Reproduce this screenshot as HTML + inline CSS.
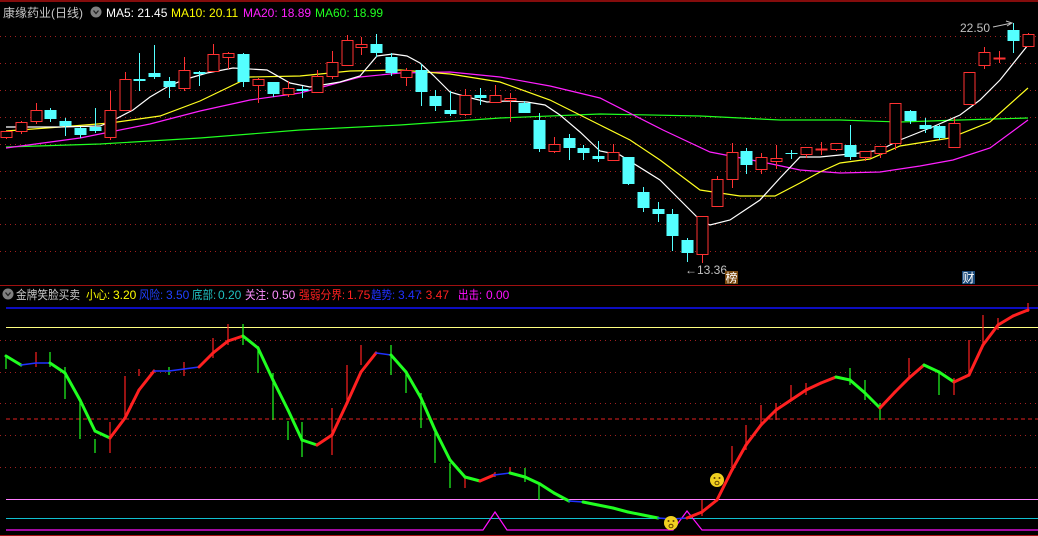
<!DOCTYPE html>
<html><head><meta charset="utf-8">
<style>
html,body{margin:0;padding:0;background:#000;width:1038px;height:536px;overflow:hidden}
svg{display:block}
text{font-family:"Liberation Sans","Noto Sans CJK SC",sans-serif;font-size:12px}
</style></head>
<body>
<svg id="s" width="1038" height="536" viewBox="0 0 1038 536" xmlns="http://www.w3.org/2000/svg">
<rect width="1038" height="536" fill="#000"/>
<line x1="0" y1="1" x2="1038" y2="1" stroke="#b01010" stroke-width="1.5"/>
<line x1="0" y1="285.5" x2="1038" y2="285.5" stroke="#a01010"/>
<line x1="0" y1="535.5" x2="1038" y2="535.5" stroke="#a01010"/>
<g id="grid" stroke="#a02020" stroke-dasharray="1,4"></g>
<line x1="6" y1="308" x2="1038" y2="308" stroke="#1010ff" stroke-width="1.5"/>
<line x1="6" y1="327.5" x2="1038" y2="327.5" stroke="#ffff80"/>
<line x1="6" y1="419" x2="1038" y2="419" stroke="#e02020" stroke-dasharray="4,3"/>
<line x1="6" y1="499.5" x2="1038" y2="499.5" stroke="#ff80ff"/>
<line x1="6" y1="518.5" x2="1038" y2="518.5" stroke="#10c0d0"/>
<polyline points="6,530 483,530 495,512 507,530 673,530 687,511 702,530 1038,530" fill="none" stroke="#ff10ff" stroke-width="1.2"/>
<g id="ma"></g>
<g id="cd"></g>
<g id="low"></g>
<circle cx="717" cy="480" r="7" fill="#f0d020"/>
<circle cx="714.5" cy="478" r="1" fill="#604000"/><circle cx="719.5" cy="478" r="1" fill="#604000"/>
<ellipse cx="717" cy="483" rx="2" ry="1.8" fill="none" stroke="#604000"/>
<circle cx="671" cy="523" r="7" fill="#f0d020"/>
<circle cx="668.5" cy="521" r="1" fill="#604000"/><circle cx="673.5" cy="521" r="1" fill="#604000"/>
<ellipse cx="671" cy="526" rx="2" ry="1.8" fill="none" stroke="#604000"/>
<!-- headers -->
<text x="3" y="17" fill="#c8c8c8" font-size="13">康缘药业(日线)</text>
<circle cx="96" cy="12" r="5.5" fill="#808080"/><path d="M93.5 10.5 L96 13.5 L98.5 10.5" stroke="#222" stroke-width="1.3" fill="none"/>
<text x="106" y="17" fill="#ffffff">MA5: 21.45</text>
<text x="171" y="17" fill="#ffff00">MA10: 20.11</text>
<text x="243" y="17" fill="#ff20ff">MA20: 18.89</text>
<text x="315" y="17" fill="#20ff20">MA60: 18.99</text>
<circle cx="8" cy="294" r="5.5" fill="#808080"/><path d="M5.5 292.5 L8 295.5 L10.5 292.5" stroke="#222" stroke-width="1.3" fill="none"/>
<text x="16" y="299" fill="#c8c8c8" font-size="13" textLength="64" lengthAdjust="spacingAndGlyphs">金牌笑脸买卖</text>
<text x="86" y="299" fill="#ffff00" textLength="24" lengthAdjust="spacingAndGlyphs">小心:</text>
<text x="113" y="299" fill="#ffff00">3.20</text>
<text x="139" y="299" fill="#2040ff" textLength="24" lengthAdjust="spacingAndGlyphs">风险:</text>
<text x="166" y="299" fill="#2040ff">3.50</text>
<text x="192" y="299" fill="#20c0c0" textLength="24" lengthAdjust="spacingAndGlyphs">底部:</text>
<text x="218" y="299" fill="#20c0c0">0.20</text>
<text x="245" y="299" fill="#ff90ff" textLength="24" lengthAdjust="spacingAndGlyphs">关注:</text>
<text x="272" y="299" fill="#ff90ff">0.50</text>
<text x="299" y="299" fill="#ff2020" textLength="46" lengthAdjust="spacingAndGlyphs">强弱分界:</text>
<text x="347" y="299" fill="#ff2020">1.75</text>
<text x="371" y="299" fill="#2030ff" textLength="24" lengthAdjust="spacingAndGlyphs">趋势:</text>
<text x="398" y="299" fill="#2030ff">3.47</text>
<text x="419" y="299" fill="#ff2020">: 3.47</text>
<text x="458" y="299" fill="#ff10ff" textLength="24" lengthAdjust="spacingAndGlyphs">出击:</text>
<text x="486" y="299" fill="#ff10ff">0.00</text>
<text x="960" y="32" fill="#c0c0c0">22.50</text>
<path d="M993 27 L1012 23 M1006 21 L1012 23 L1007 26" stroke="#c0c0c0" fill="none"/>
<text x="685" y="274" fill="#c0c0c0">←13.36</text>
<rect x="725" y="271" width="13" height="13" fill="#7a4a10"/>
<text x="725.5" y="282" fill="#fff" font-size="12">榜</text>
<rect x="962" y="271" width="13" height="13" fill="#1a4a7a"/>
<text x="962.5" y="282" fill="#fff" font-size="12">财</text>
</svg>
<script>
var NS="http://www.w3.org/2000/svg";
function el(p,t,a){var e=document.createElementNS(NS,t);for(var k in a)e.setAttribute(k,a[k]);document.getElementById(p).appendChild(e);return e;}
[36,63,90,117,144,171,198,224,251,340,372,403,435,467].forEach(function(y){el("grid","line",{x1:0,y1:y+.5,x2:1038,y2:y+.5});});
function pl(id,pts,c,w){el(id,"polyline",{points:pts.map(function(p){return p.join(",")}).join(" "),fill:"none",stroke:c,"stroke-width":w||1.2});}
pl("ma",[[6,147],[100,144],[200,138],[300,130],[400,125],[500,118],[600,114],[700,116],[780,120],[840,120],[900,122],[960,120],[1028,118]],"#20ff20");
pl("ma",[[6,148],[80,138],[150,124],[200,111],[250,100],[300,93],[360,77],[400,73],[450,72],[500,77],[550,86],[600,98],[663,130],[710,152],[767,163],[800,170],[840,173],[880,172],[920,166],[953,160],[990,148],[1028,120]],"#ff20ff");
pl("ma",[[6,131],[60,127],[110,123],[160,116],[200,101],[250,77],[300,76],[350,71],[400,70],[450,74],[500,82],[550,100],[600,125],[630,140],[660,160],[700,190],[740,196],[775,196],[800,183],[820,172],[840,163],[870,159],[900,146],[950,138],[990,122],[1028,88]],"#ffff20");
pl("ma",[[6,127],[60,127],[100,126],[110,122],[133,110],[150,97],[167,87],[183,80],[207,73],[233,68],[267,70],[290,83],[310,87],[340,82],[360,76],[377,56],[393,54],[407,56],[420,63],[433,75],[450,92],[467,97],[487,102],[507,101],[527,102],[545,105],[560,115],[580,132],[600,151],[620,155],[660,180],[680,200],[700,220],[710,225],[730,220],[760,200],[780,178],[800,157],[820,157],[860,153],[880,150],[900,140],[930,128],[960,115],[980,100],[1000,80],[1028,45]],"#ffffff");
var C=[[6,131,137,131,139,1],[21,122,131,121,134,1],[36,110,121,103,124,1],[50,110,119,108,122,0],[65,121,126,118,136,0],[80,128,135,127,138,0],[95,127,131,108,133,0],[110,110,137,91,140,1],[125,79,110,72,111,1],[139,79,81,53,91,0],[154,73,77,45,79,0],[169,81,87,77,98,0],[184,70,88,57,91,1],[199,72,74,71,86,0],[213,54,71,44,72,1],[228,53,57,52,69,1],[243,54,82,53,87,0],[258,79,85,78,103,1],[273,82,94,82,97,0],[288,88,94,81,97,1],[302,89,91,86,98,0],[317,76,92,70,92,1],[332,62,76,51,79,1],[347,40,65,35,65,1],[361,44,47,37,55,1],[376,44,53,34,57,0],[391,57,73,53,76,0],[406,70,77,68,86,1],[421,70,92,64,106,0],[435,96,106,90,111,0],[450,110,114,91,116,0],[465,95,114,89,116,1],[480,95,98,88,105,0],[495,95,102,85,102,1],[510,98,100,93,122,1],[524,103,113,101,113,0],[539,120,149,113,152,0],[554,144,151,137,153,1],[569,138,148,134,160,0],[583,148,153,145,160,0],[598,156,159,141,162,0],[613,152,160,144,160,1],[628,157,184,157,185,0],[643,192,208,187,212,0],[658,209,214,202,222,0],[672,214,236,209,251,0],[687,240,253,238,262,0],[702,216,254,216,263,1],[717,179,206,176,206,1],[732,152,179,143,188,1],[746,151,165,148,174,0],[761,157,169,153,174,1],[776,158,161,145,169,1],[791,153,154,150,159,0],[806,147,154,147,158,1],[821,148.5,149.5,142,155,1],[836,143,149,143,151,1],[850,145,157,125,160,0],[865,151,157,151,161,1],[880,146,153,146,158,1],[895,103,143,103,150,1],[910,111,121,110,124,0],[925,125,129,118,133,0],[939,126,138,125,140,0],[954,123,147,118,147,1],[969,72,104,72,104,1],[984,52,65,47,69,1],[999,57.5,58.5,51,63,1],[1013,30,41,23,53,0],[1028,34,46,33,46,1]];
C.forEach(function(c){var x=c[0],up=c[5],col=up?"#ff3232":"#54ffff";
 el("cd","line",{x1:x+.5,y1:c[3],x2:x+.5,y2:c[1],stroke:col});
 el("cd","line",{x1:x+.5,y1:c[2],x2:x+.5,y2:c[4],stroke:col});
 var h=Math.max(c[2]-c[1],1);
 if(up)el("cd","rect",{x:x-5,y:c[1]+.5,width:11,height:h,fill:"#000",stroke:col});
 else el("cd","rect",{x:x-5.5,y:c[1],width:12,height:h,fill:col});
});
var S=[[6,356,369,"g"],[36,352,367,"r"],[50,352,367,"g"],[65,367,399,"g"],[80,400,439,"g"],[95,439,453,"g"],[110,422,453,"r"],[125,376,418,"r"],[139,369,376,"r"],[169,367,375,"g"],[184,362,376,"r"],[213,338,358,"r"],[228,324,345,"r"],[243,324,345,"g"],[258,346,373,"g"],[273,373,420,"g"],[288,421,440,"g"],[302,422,457,"g"],[332,408,455,"r"],[347,365,405,"r"],[361,345,365,"r"],[391,345,375,"g"],[406,372,393,"g"],[421,393,428,"g"],[435,430,463,"g"],[450,463,488,"g"],[465,477,488,"r"],[495,472,477,"r"],[510,467,473,"r"],[525,468,482,"g"],[539,483,500,"g"],[702,500,516,"r"],[732,446,470,"r"],[746,425,450,"r"],[761,405,425,"r"],[776,403,420,"r"],[791,385,400,"r"],[806,383,395,"r"],[850,368,385,"g"],[865,380,400,"g"],[880,403,420,"g"],[909,358,378,"r"],[939,373,395,"g"],[954,378,395,"r"],[969,340,375,"r"],[983,315,345,"r"],[998,318,330,"r"],[1028,303,312,"r"]];
S.forEach(function(s){el("low","line",{x1:s[0],y1:s[1],x2:s[0],y2:s[2],stroke:s[3]=="g"?"#20ff20":"#ff2020","stroke-width":1.2});});
var P=[[6,356],[21,365],[36,363],[50,363],[65,373],[80,400],[95,431],[110,438],[125,418],[139,390],[154,371],[169,371],[184,369],[199,367],[213,353],[228,341],[243,336],[258,348],[273,380],[288,410],[302,440],[317,445],[332,435],[347,403],[361,372],[376,353],[391,355],[406,372],[421,398],[435,430],[450,460],[465,477],[480,481],[494,475],[510,473],[525,477],[540,484],[554,493],[569,501],[583,502],[598,505],[613,508],[628,512],[643,515],[658,518],[672,519],[687,518],[702,512],[717,500],[732,470],[746,445],[761,425],[776,410],[791,400],[806,390],[821,383],[836,377],[850,380],[865,393],[880,408],[895,392],[909,378],[924,365],[939,372],[954,382],[969,375],[983,345],[998,325],[1013,316],[1028,310]];
for(var i=0;i<P.length-1;i++){var a=P[i],b=P[i+1],d=b[1]-a[1];
 var col=d>2?"#20ff20":(d<-2?"#ff2020":"#2030ff");var w=Math.abs(d)>2?3:1.5;
 el("low","line",{x1:a[0],y1:a[1],x2:b[0],y2:b[1],stroke:col,"stroke-width":w,"stroke-linecap":"round"});}
</script>
</body></html>
